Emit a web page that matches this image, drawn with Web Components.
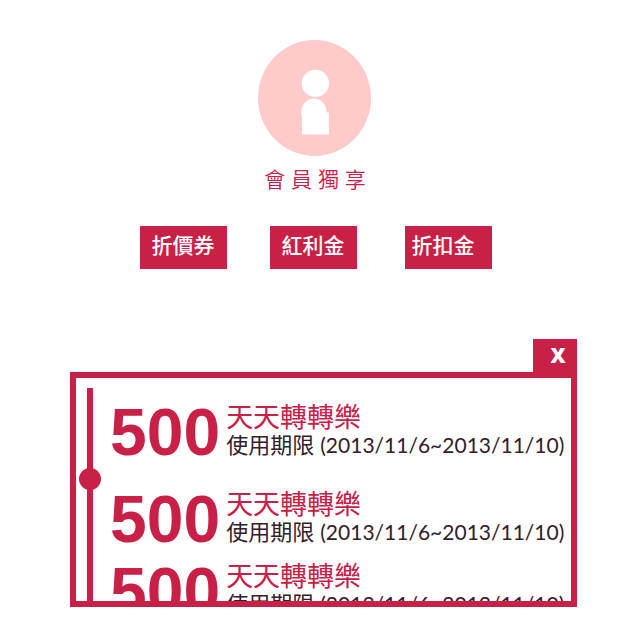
<!DOCTYPE html>
<html lang="zh-Hant">
<head>
<meta charset="utf-8">
<meta name="viewport" content="width=device-width, initial-scale=1">
<title>會員獨享</title>
<style>
  body { margin: 0; background: #fff; font-family: "Liberation Sans", "Noto Sans CJK TC", sans-serif; --brand: #c92047; --ink: #33202a; }
</style>
</head>
<body>
<member-page>
  <member-badge slot="header">會 員 獨 享</member-badge>
  <reward-tabs slot="tabs">
    <reward-button>折價券</reward-button>
    <reward-button>紅利金</reward-button>
    <reward-button compact>折扣金</reward-button>
  </reward-tabs>
  <coupon-panel>
    <coupon-item amount="500" label="使用期限" period="(2013/11/6~2013/11/10)">天天轉轉樂</coupon-item>
    <coupon-item amount="500" label="使用期限" period="(2013/11/6~2013/11/10)">天天轉轉樂</coupon-item>
    <coupon-item amount="500" label="使用期限" period="(2013/11/6~2013/11/10)">天天轉轉樂</coupon-item>
  </coupon-panel>
</member-page>

<script>
class BaseElement extends HTMLElement {
  constructor() {
    super();
    this.attachShadow({ mode: 'open' });
  }
  connectedCallback() {
    this.shadowRoot.innerHTML = this.render();
  }
}

customElements.define('member-page', class extends BaseElement {
  render() {
    return `<style>
      :host { display: block; padding: 40px 0 36px; }
      header { display: flex; justify-content: center; padding-right: 10px; margin-bottom: 32px; }
      nav { display: flex; justify-content: center; padding-right: 9px; margin-bottom: 70px; }
      main { padding: 0 63px 0 70px; }
    </style>
    <header><slot name="header"></slot></header>
    <nav><slot name="tabs"></slot></nav>
    <main><slot></slot></main>`;
  }
});

customElements.define('member-badge', class extends BaseElement {
  render() {
    return `<style>
      :host { display: flex; flex-direction: column; align-items: center; gap: 10px; }
      svg { display: block; width: 114px; height: 116px; }
      h1 { margin: 0; font: 350 21px/28px "Liberation Sans", "Noto Sans CJK TC DemiLight", "Noto Sans CJK TC", sans-serif; color: var(--brand); }
    </style>
    <svg viewBox="0 0 114 116" aria-hidden="true">
      <ellipse cx="56.5" cy="58" rx="56.5" ry="58" fill="#fecaca"/>
      <circle cx="57.4" cy="43.4" r="13.7" fill="#fff"/>
      <path fill="#fff" d="M44 94.5V76.5C43.2 75 43.3 73 43.5 71A12.4 12.4 0 0 1 68.3 71L68.6 72.6H71V94.5Z"/>
    </svg>
    <h1><slot></slot></h1>`;
  }
});

customElements.define('reward-tabs', class extends BaseElement {
  render() {
    return `<style>
      :host { display: grid; grid-template-columns: 130px 135px 87px; }
    </style><slot></slot>`;
  }
});

customElements.define('reward-button', class extends BaseElement {
  render() {
    return `<style>
      :host { display: block; }
      button { display: block; width: 87px; margin: 0; padding: 6px 0 9px 12px; border: 0; background: var(--brand); color: #fff;
        font: 500 21px/28px "Liberation Sans", "Noto Sans CJK TC", sans-serif; text-align: left; cursor: pointer; }
      :host([compact]) button { padding-left: 7px; }
    </style><button type="button"><slot></slot></button>`;
  }
});

customElements.define('coupon-panel', class extends BaseElement {
  render() {
    return `<style>
      :host { display: flex; flex-direction: column; align-items: stretch; }
      .close { align-self: flex-end; width: 44px; height: 33px; margin: 0; padding: 0 0 0 6px; border: 0; background: var(--brand); color: #fff;
        font: 800 21px/33px "Open Sans", sans-serif; cursor: pointer; }
      section { box-sizing: border-box; height: 235px; display: flex; border: 6px solid var(--brand); padding: 10px 0 0 3px; overflow: hidden; }
      input { appearance: none; -webkit-appearance: none; writing-mode: vertical-lr; flex: none; width: 22px; height: auto; margin: 0; background: none; }
      input::-webkit-slider-runnable-track { width: 6px; background: var(--brand); }
      input::-webkit-slider-thumb { -webkit-appearance: none; width: 22px; height: 22px; margin-left: -8px; border-radius: 50%; background: var(--brand); }
      .list { flex: 1; min-width: 0; padding: 16px 0 0 9px; display: flex; flex-direction: column; gap: 16px; }
      ::slotted(:first-child) { margin-bottom: 15px; }
    </style>
    <button class="close" type="button" aria-label="關閉">X</button>
    <section>
      <input type="range" min="0" max="100" value="42" aria-label="捲動">
      <div class="list"><slot></slot></div>
    </section>`;
  }
});

customElements.define('coupon-item', class extends BaseElement {
  render() {
    return `<style>
      :host { display: flex; flex: none; gap: 6px; white-space: nowrap; }
      .amount { font: 700 66px/56px "Liberation Sans", sans-serif; color: var(--brand); }
      h2, p { margin: 0; }
      h2 { font: 400 27px/28px "Liberation Sans", "Noto Sans CJK TC", sans-serif; color: var(--brand); }
      p { font: 400 22px/28px "Liberation Sans", "Noto Sans CJK TC", sans-serif; color: var(--ink); }
      time { font: 400 21px/20px Lato, sans-serif; }
    </style>
    <div class="amount">${this.getAttribute('amount')}</div>
    <div><h2><slot></slot></h2><p>${this.getAttribute('label')} <time>${this.getAttribute('period')}</time></p></div>`;
  }
});
</script>
</body>
</html>
